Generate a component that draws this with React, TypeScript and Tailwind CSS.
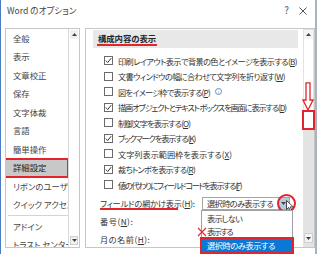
import React, { useLayoutEffect, useRef, useState } from "react";

function Fit({ w, children, className }: { w: number; children: React.ReactNode; className?: string }) {
  const ref = useRef<HTMLSpanElement>(null);
  const [ls, setLs] = useState(0);
  useLayoutEffect(() => {
    const measure = () => {
      const el = ref.current;
      if (!el) return;
      const prev = el.style.letterSpacing;
      el.style.letterSpacing = "0px";
      const nat = el.getBoundingClientRect().width;
      el.style.letterSpacing = prev;
      const n = (el.textContent || "").length || 1;
      const v = Math.max(-1.5, Math.min(0.5, (w - nat) / n));
      setLs(v);
    };
    measure();
    if (document.fonts && document.fonts.ready) document.fonts.ready.then(measure);
  }, [w]);
  return (
    <span ref={ref} className={"inline-block whitespace-nowrap " + (className || "")} style={{ letterSpacing: `${ls}px` }}>
      {children}
    </span>
  );
}

const Check = ({ on }: { on: boolean }) => (
  <span className="w-[9px] h-[9px] border border-[#6a6a6a] bg-white flex items-center justify-center shrink-0">
    {on && (
      <svg width="7" height="7" viewBox="0 0 7 7">
        <path d="M0.8 3.6 L2.7 5.5 L6.2 1.2" fill="none" stroke="#333" strokeWidth="1" />
      </svg>
    )}
  </span>
);

const K = ({ c }: { c: string }) => (
  <>
    (<span className="underline underline-offset-[1px]">{c}</span>)
  </>
);

const rows: { t: string; k: string; on: boolean; w: number; info?: boolean }[] = [
  { t: "印刷レイアウト表示で背景の色とイメージを表示する", k: "B", on: true, w: 179 },
  { t: "文書ウィンドウの幅に合わせて文字列を折り返す", k: "W", on: false, w: 167 },
  { t: "図をイメージ枠で表示する", k: "P", on: false, info: true, w: 92 },
  { t: "描画オブジェクトとテキスト ボックスを画面に表示する", k: "D", on: true, w: 168 },
  { t: "制御文字を表示する", k: "O", on: false, w: 72 },
  { t: "ブックマークを表示する", k: "K", on: true, w: 77 },
  { t: "文字列表示範囲枠を表示する", k: "X", on: false, w: 114 },
  { t: "裁ちトンボを表示する", k: "R", on: true, w: 77 },
  { t: "値の代わりにフィールド コードを表示する", k: "F", on: false, w: 123 },
];

const nav = ["全般", "表示", "文章校正", "保存", "文字体裁", "言語", "簡単操作", "詳細設定", "リボンのユーザー設定", "クイック アクセス ツール バー"];

const Tri = ({ down }: { down?: boolean }) => (
  <svg width="5" height="3" viewBox="0 0 5 3">
    <path d={down ? "M0 0 L5 0 L2.5 3 Z" : "M0 3 L5 3 L2.5 0 Z"} fill="#444" />
  </svg>
);

export default function App() {
  return (
    <div className="w-[320px] h-[254px] bg-white relative overflow-hidden flex font-['Noto_Sans_CJK_JP','Noto_Sans',sans-serif] [font-feature-settings:'palt'] text-[8.4px] text-[#333]">
      <div className="w-[317px] h-full border-l border-l-[#4a7cc2] border-r-2 border-r-[#a9b3c0] flex flex-col">
        {/* title */}
        <div className="h-[28px] flex items-start pt-[4px] pl-[6px] pr-[8px] text-[#444]">
          <span className="text-[8.6px] leading-[12px] whitespace-nowrap">Word のオプション</span>
          <span className="ml-auto text-[10px] leading-[12px] text-[#555]">?</span>
          <span className="ml-[10px] mt-[3px]">
            <svg width="8" height="8" viewBox="0 0 8 8">
              <path d="M0.5 0.5 L7.5 7.5 M7.5 0.5 L0.5 7.5" stroke="#555" strokeWidth="1" />
            </svg>
          </span>
        </div>
        {/* body */}
        <div className="h-[220px] flex pl-[4px] gap-[5px]">
          {/* left nav */}
          <div className="w-[75px] h-full border border-[#c6c6c6] flex relative">
            <div className="flex-1 flex flex-col overflow-hidden text-[#444]">
              {nav.map((n, i) => (
                <div
                  key={n}
                  className={
                    "h-[18.5px] shrink-0 flex items-center pl-[7px] whitespace-nowrap relative " +
                    (i === 7 ? "bg-[#c8c8c8] text-[#222]" : "")
                  }
                >
                  {n}
                  {i === 7 && (
                    <span className="absolute left-[-3px] top-[-1px] w-[66px] h-[20px] border-2 border-[#e3242b]" />
                  )}
                </div>
              ))}
              <div className="h-[3px] shrink-0 flex items-center pl-[2px]">
                <div className="w-[60px] h-px bg-[#d4d4d4]" />
              </div>
              {["アドイン", "トラスト センター"].map((n) => (
                <div key={n} className="h-[18.5px] shrink-0 flex items-center pl-[7px] whitespace-nowrap">
                  {n}
                </div>
              ))}
            </div>
            <div className="w-[11px] h-full border-l border-[#dadada] flex flex-col">
              <div className="h-[9px] mt-[1px] mx-[1px] bg-[#f0f0f0] flex items-center justify-center">
                <Tri />
              </div>
              <div className="flex-1" />
              <div className="h-[9px] mb-[2px] mx-[1px] bg-[#f0f0f0] border border-[#cfcfcf] flex items-center justify-center">
                <Tri down />
              </div>
            </div>
          </div>
          {/* right panel */}
          <div className="w-[230px] h-full border border-[#c6c6c6] flex text-[8.2px]">
            <div className="flex-1 flex flex-col">
              <div className="mt-[1px] ml-[7px] w-[205px] h-[18px] bg-[#e8e8e8] flex items-center pl-[4px]">
                <span className="font-bold text-[8.4px] text-[#262626] border-b-2 border-[#e3242b] leading-[10px] pb-[1px] px-px">
                  <Fit w={58}>構成内容の表示</Fit>
                </span>
              </div>
              <div className="mt-[5px] flex flex-col">
                {rows.map((r) => (
                  <div key={r.t} className="h-[15.5px] flex items-center pl-[18px] whitespace-nowrap">
                    <Check on={r.on} />
                    <Fit w={r.w} className="ml-[5px]">
                      {r.t}
                      <K c={r.k} />
                    </Fit>
                    {r.info && (
                      <span className="ml-[5px] w-[7px] h-[7px] rounded-full border border-[#6b8fc0] text-[#6b8fc0] text-[5px] leading-[5px] flex items-center justify-center">
                        i
                      </span>
                    )}
                  </div>
                ))}
              </div>
              <div className="mt-[4.5px] h-[13px] flex items-center pl-[14px] relative">
                <span className="w-[102px] shrink-0 whitespace-nowrap relative">
                  <Fit w={95}>
                    フィールドの網かけ表示<K c="H" />:
                  </Fit>
                  <span className="absolute left-0 top-[11px] w-[78px] h-[2px] bg-[#e3242b]" />
                </span>
                <div className="w-[88px] h-[13px] border border-[#a6a6a6] bg-white flex items-center relative">
                  <Fit w={70} className="pl-[4px]">選択時のみ表示する</Fit>
                  <span className="ml-auto w-[11px] h-[11px] bg-[#b6c8df] flex items-center justify-center">
                    <Tri down />
                  </span>
                  <span className="absolute left-[74px] top-[-4px] w-[19px] h-[19px] rounded-full border-2 border-[#e3242b]" />
                  <svg className="absolute left-[83px] top-[2px]" width="8" height="12" viewBox="0 0 8 12">
                    <path d="M0.5 0.5 L0.5 9.5 L2.8 7.4 L4.4 11 L5.8 10.4 L4.3 6.9 L7.3 6.9 Z" fill="white" stroke="#222" strokeWidth="0.8" />
                  </svg>
                </div>
                {/* dropdown popup */}
                <div className="absolute left-[115px] top-[13px] w-[92px] h-[43px] border border-[#a0a0a0] bg-white flex flex-col z-10">
                  <div className="h-[14px] flex items-center pl-[5px]">
                    <Fit w={35}>表示しない</Fit>
                  </div>
                  <div className="h-[14px] flex items-center pl-[5px]">
                    <Fit w={25}>表示する</Fit>
                  </div>
                  <div className="h-[14px] flex items-center pl-[5px] bg-[#0a78d7] text-white relative">
                    <Fit w={68}>選択時のみ表示する</Fit>
                    <span className="absolute left-[-2px] top-[-1px] w-[94px] h-[17px] border-2 border-[#e3242b]" />
                  </div>
                  <svg className="absolute left-[-5px] top-[16px]" width="10" height="10" viewBox="0 0 10 10">
                    <path d="M1 1 L9 9 M9 1 L1 9" stroke="#e3242b" strokeWidth="1.1" />
                  </svg>
                </div>
              </div>
              <div className="mt-[4px] h-[15px] flex items-center pl-[14px]">
                <Fit w={46}>
                  番号<K c="N" />:
                </Fit>
              </div>
              <div className="mt-[2.5px] h-[15px] flex items-center pl-[14px]">
                <Fit w={52}>
                  月の名前<K c="H" />:
                </Fit>
              </div>
            </div>
            {/* right scrollbar */}
            <div className="w-[11px] h-full bg-[#e3e3e3] flex flex-col">
              <div className="h-[9px] mt-[1px] mx-[1px] bg-[#f4f4f4] flex items-center justify-center">
                <Tri />
              </div>
              <div className="h-[90px] mx-[1px] bg-white" />
              <div className="flex-1" />
              <div className="h-[10px] mb-[4px] mx-[1px] bg-[#f4f4f4] border border-[#cfcfcf] flex items-center justify-center">
                <Tri down />
              </div>
            </div>
          </div>
        </div>
      </div>
      {/* annotations on scrollbar */}
      <svg className="absolute left-[302px] top-[82px]" width="12" height="29" viewBox="0 0 12 29">
        <path d="M4 0.8 L8 0.8 L8 18 L11 18 L6 28 L1 18 L4 18 Z" fill="white" stroke="#e3242b" strokeWidth="1.3" />
      </svg>
      <div className="absolute left-[302px] top-[110px] w-[13px] h-[20px] border-2 border-[#e3242b] bg-white" />
    </div>
  );
}
